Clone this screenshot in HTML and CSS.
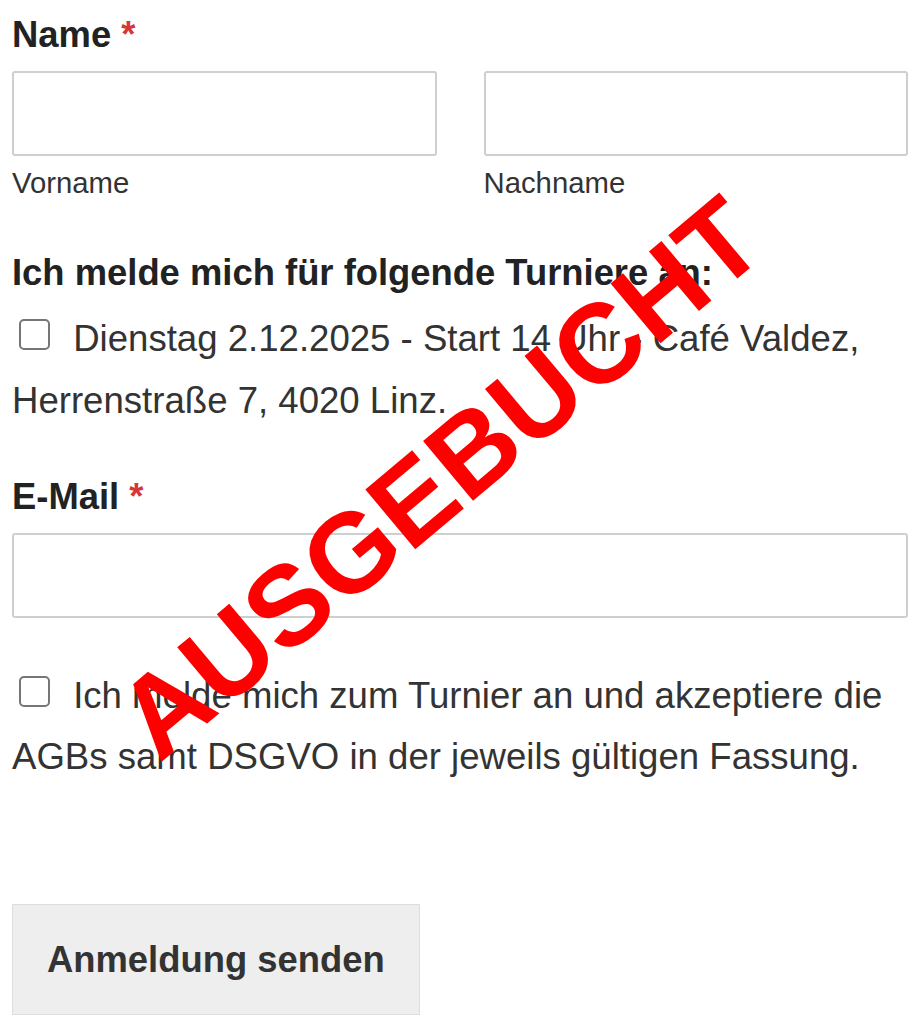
FILE: index.html
```html
<!DOCTYPE html>
<html lang="de">
<head>
    <meta charset="UTF-8">
    <meta name="viewport" content="width=device-width, initial-scale=1.0">
    <title>Turnier-Anmeldung</title>
    <link rel="stylesheet" href="styles.css">
</head>
<body>

    <form class="signup-form" onsubmit="return false">
        <div class="field field-name">
            <label class="field-label">Name <span class="required">*</span></label>
            <div class="name-row">
                <div class="name-col">
                    <input type="text" class="text-input">
                    <span class="sublabel">Vorname</span>
                </div>
                <div class="name-col">
                    <input type="text" class="text-input">
                    <span class="sublabel">Nachname</span>
                </div>
            </div>
        </div>

        <div class="field field-tournaments">
            <div class="field-label">Ich melde mich für folgende Turniere an:</div>
            <label class="choice"><input type="checkbox" class="check"> Dienstag 2.12.2025 - Start 14 Uhr - Café Valdez, Herrenstraße 7, 4020 Linz.</label>
        </div>

        <div class="field field-email">
            <label class="field-label">E-Mail <span class="required">*</span></label>
            <input type="email" class="text-input">
        </div>

        <div class="field field-terms">
            <label class="choice"><input type="checkbox" class="check"> Ich melde mich zum Turnier an und akzeptiere die AGBs samt DSGVO in der jeweils gültigen Fassung.</label>
        </div>

        <button type="submit" class="submit-btn">Anmeldung senden</button>
    </form>

    <!-- Stempel über dem Formular -->
    <div class="stamp">AUSGEBUCHT</div>

</body>
</html>
```

FILE: styles.css
```css
body {
    margin: 0;
    padding: 12px 12px 0;
    font-family: "Liberation Sans", Arial, sans-serif;
    background-color: #fff;
    color: #333;
}
.signup-form {
    width: 896px;
}
.field-label {
    display: block;
    font-size: 36.4px;
    font-weight: bold;
    line-height: 46.8px;
    color: #222;
    margin-bottom: 12px;
}
.required {
    color: #d63637;
}
.name-row {
    display: grid;
    grid-template-columns: 1fr 1fr;
    column-gap: 47px;
}
.text-input {
    display: block;
    width: 100%;
    height: 85px;
    box-sizing: border-box;
    border: 2px solid #cfcfcf;
    border-radius: 3px;
    background: #fff;
    font-size: 36px;
    padding: 0 18px;
}
.sublabel {
    display: block;
    margin-top: 8px;
    font-size: 29.3px;
    line-height: 37.7px;
    color: #333;
}
.field-name {
    margin-bottom: 48px;
}
.field-tournaments {
    margin-bottom: 43px;
}
.field-email {
    margin-bottom: 47px;
}
.field-terms {
    margin-bottom: 117px;
}
.choice {
    display: block;
    font-size: 36.6px;
    line-height: 61.2px;
    color: #333;
}
.check {
    appearance: none;
    -webkit-appearance: none;
    width: 31px;
    height: 31px;
    box-sizing: border-box;
    border: 2px solid #767676;
    border-radius: 5px;
    background: #fff;
    margin: 0 13px 1px 7px;
    vertical-align: baseline;
}
.submit-btn {
    font-family: inherit;
    font-size: 36.4px;
    font-weight: bold;
    line-height: 43px;
    color: #333;
    background-color: #eee;
    border: 1px solid #ddd;
    padding: 33px 34px;
    cursor: pointer;
}
.stamp {
    position: absolute;
    left: 440px;
    top: 478px;
    transform: translate(-50%, -50%) rotate(-40deg);
    font-size: 113px;
    font-weight: bold;
    line-height: 1;
    color: #ff0000;
    white-space: nowrap;
    pointer-events: none;
}
```
